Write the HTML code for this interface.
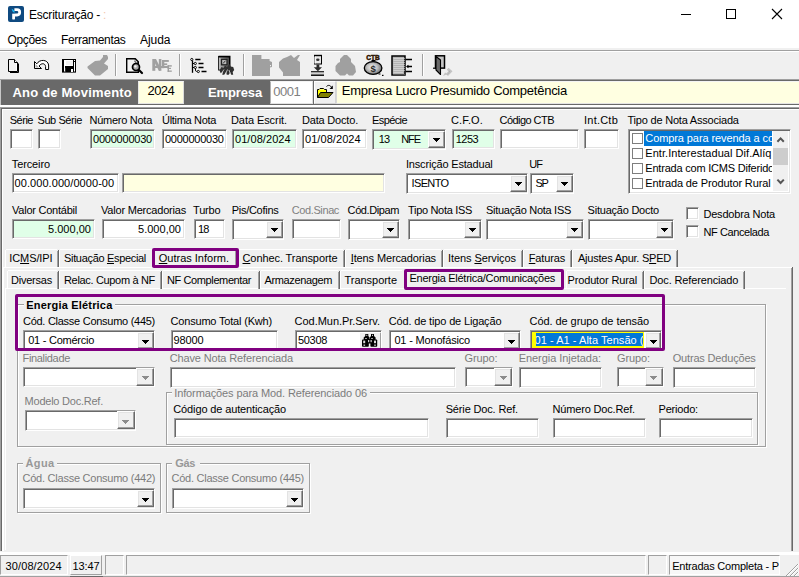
<!DOCTYPE html>
<html><head><meta charset="utf-8"><title>Escrituração</title>
<style>
html,body{margin:0;padding:0}
body{width:799px;height:577px;overflow:hidden;position:relative;background:#f0f0f0;font-family:"Liberation Sans",sans-serif;font-size:11px;color:#000}
body>div,body>svg,body>span{position:absolute;box-sizing:border-box}
.t{white-space:nowrap}
.t u{text-decoration:underline}
.f{border:1px solid;border-color:#a0a0a0 #fff #fff #a0a0a0;box-shadow:inset 1px 1px 0 #696969,inset -1px -1px 0 #e3e3e3}
.btn{background:#f0f0f0;border:1px solid;border-color:#fff #696969 #696969 #fff;box-shadow:inset -1px -1px 0 #a0a0a0,inset 1px 1px 0 #e3e3e3}
.g{border:1px solid #a0a0a0;box-shadow:1px 1px 0 #fff,inset 1px 1px 0 #fff}

</style></head>
<body>
<div style="left:0px;top:0px;width:799px;height:48px;background:#fff"></div>
<svg style="left:8px;top:6px" width="16" height="16" viewBox="0 0 16 16"><rect x="0" y="0" width="16" height="16" rx="2" fill="#0f4a80"/><rect x="4.200" y="7.400" width="2.800" height="6" rx="0.600" fill="#fff"/><path d="M6.400 3.700H9.050A2.650 2.650 0 0 1 9.050 9H5.600" fill="none" stroke="#fff" stroke-width="2.800"/><path d="M3.700 2.700C5.600 3.400 7 5 6.800 7C5 6.400 3.800 4.600 3.700 2.700Z" fill="#19b5f1"/><path d="M4.200 6.500C5 7.200 6.400 7.300 7.400 6.800" fill="none" stroke="#0f4a80" stroke-width="0.900"/></svg>
<svg style="left:680px;top:8px" width="110" height="14" viewBox="0 0 110 14"><path d="M1 6.5h10" stroke="#000" stroke-width="1"/><rect x="46.5" y="1.5" width="9" height="9" fill="none" stroke="#000" stroke-width="1"/><path d="M92 1l10 10M102 1l-10 10" stroke="#000" stroke-width="1.1"/></svg>
<div style="left:0px;top:50px;width:799px;height:1px;background:#a0a0a0"></div>
<div style="left:0px;top:51px;width:799px;height:1px;background:#fff"></div>
<div style="left:115px;top:54px;width:1px;height:22px;background:#a0a0a0"></div>
<div style="left:116px;top:54px;width:1px;height:22px;background:#fff"></div>
<div style="left:179px;top:54px;width:1px;height:22px;background:#a0a0a0"></div>
<div style="left:180px;top:54px;width:1px;height:22px;background:#fff"></div>
<div style="left:243px;top:54px;width:1px;height:22px;background:#a0a0a0"></div>
<div style="left:244px;top:54px;width:1px;height:22px;background:#fff"></div>
<div style="left:422px;top:54px;width:1px;height:22px;background:#a0a0a0"></div>
<div style="left:423px;top:54px;width:1px;height:22px;background:#fff"></div>
<svg style="left:0;top:50px" width="799" height="30" viewBox="0 50 799 30"><defs><linearGradient id="g8" x1="0" x2="1" y1="0" y2="0"><stop offset="0" stop-color="#c4c4c4"/><stop offset="1" stop-color="#4a4a4a"/></linearGradient><radialGradient id="bag" cx="0.45" cy="0.45" r="0.6"><stop offset="0" stop-color="#f4f4f4"/><stop offset="0.5" stop-color="#c0c0c0"/><stop offset="1" stop-color="#606060"/></radialGradient></defs><path d="M8.5 59.5H14.5L17.5 62.5V71.5H8.5Z" fill="#f2f2f2" stroke="#000"/><path d="M14.5 59.5V62.5H17.5" fill="#fff" stroke="#000"/><path d="M16.500 63.500V70.500" stroke="#fff"/><path d="M10 72.5H18.5V63.500" fill="none" stroke="#000"/><path d="M34.5 61.5V68.5H41.5L39 66C41 63.2 45 62.6 45.6 66.5V69.5H48.6V65C47.8 59.2 39.5 59 36.8 63.8Z" fill="#fff" stroke="#000" stroke-linejoin="round"/><path d="M35.5 64v3.5h3.5z" fill="#b0b0b0"/><rect x="62" y="59" width="14" height="13.6" fill="#000"/><rect x="65" y="60" width="8" height="6" fill="#f0f0f0"/><path d="M65.500 65.500V60.500H72.500" fill="none" stroke="#fff"/><rect x="65" y="65" width="8" height="1" fill="#fff"/><rect x="64" y="60" width="1" height="11.500" fill="#fff"/><rect x="74" y="62" width="1" height="9.500" fill="#fff"/><rect x="74" y="60" width="1" height="1" fill="#fff"/><rect x="71" y="69" width="2" height="3" fill="#fff"/><rect x="65" y="68" width="0.500" height="4" fill="#555"/><path d="M103 55H107L108 57V59L104 63.5L108 66V69L100 75.5H95L87.5 68V66.5L95 61L100 60.5L103 57Z" fill="#a0a0a0"/><path d="M126.700 58.700H135.300L138.300 61.700V72.300H126.700Z" fill="#f2f2f2" stroke="#000" stroke-width="1.400"/><path d="M135 59.500v2.800h2.800" fill="none" stroke="#000" stroke-width="0.900" stroke-dasharray="1 0.600"/><circle cx="136" cy="67" r="3.500" fill="#a8a8a8" stroke="#000" stroke-width="1.700"/><circle cx="135.400" cy="66.400" r="1.200" fill="#f4f4f4"/><path d="M139 70L142 73" stroke="#000" stroke-width="2.200" stroke-linecap="round"/><g fill="#a0a0a0"><rect x="152.3" y="59" width="3" height="11.8"/><rect x="158.8" y="59" width="2.6" height="11.8"/><path d="M154.5 59h1.5l4 8v3.8h-1.2l-4.3-8.5z"/><rect x="162" y="60" width="2.3" height="8.2"/><rect x="162" y="60" width="6.8" height="1.9"/><rect x="162" y="63.4" width="5.2" height="1.7"/><rect x="167.6" y="65.2" width="1.4" height="6.6"/><rect x="167.6" y="65.2" width="4.2" height="1.4"/><rect x="167.6" y="67.8" width="3.4" height="1.2"/><rect x="167.6" y="70.5" width="4.2" height="1.3"/><rect x="155" y="66" width="13.500" height="2"/></g><g stroke="#000" fill="none"><path d="M192.5 60.5V72.8" stroke-width="1.3"/><path d="M195.300 59.5H200.5M198.5 63.5H203.5M198.5 67.5H203.5M201.5 71.5H206.5" stroke-width="1.3"/><path d="M192.5 63.5H194M192.5 67.5H194M195.5 68.5V70.8L196.8 71.5" stroke-width="1"/><circle cx="191.8" cy="59.5" r="1.1" fill="#fff"/><circle cx="195.3" cy="63.5" r="1.1" fill="#fff"/><circle cx="195.3" cy="67.5" r="1.1" fill="#fff"/><circle cx="198.3" cy="71.5" r="1.1" fill="#fff"/></g><rect x="218.500" y="56.500" width="11" height="13.500" fill="url(#g8)" stroke="#2a2a2a"/><path d="M218.500 56.600h11.200v13" fill="none" stroke="#000" stroke-width="1.600"/><rect x="221.500" y="59.300" width="5.500" height="5.500" fill="#b8b8b8" stroke="#222" stroke-width="1.300"/><path d="M223 63.500l2.500-2.800" stroke="#333"/><path d="M219.500 70.500l2-3.500 2 1 1.500-2.500 2 1.500 2.500-3 1.200 2.500 2.500 0.500 1 3-1.500 2 0.500 2.700h-2l-1-2.500-1.500 2.500h-2l-0.500-3-2 3h-2l1-3.500-2.500 2z" fill="#303030"/><path d="M222 72.500l2-3M226 73l1.500-3.500M230 73l-1-3" stroke="#c8c8c8" stroke-width="0.900"/><path d="M252 55H261.4V59H269.6V61L272 62V67L270 67.500V76H252Z" fill="#a0a0a0"/><rect x="270" y="65" width="1" height="1.200" fill="#f0f0f0"/><path d="M283 58.500L287 57L291 55L294 58L298 55H300L297 60L300 62V76H283V72.500L279 67.500V62Z" fill="#a0a0a0"/><rect x="314.500" y="55.500" width="7" height="8.500" fill="#e8e8e8" stroke="#000"/><path d="M314 55.500H322" stroke="#000" stroke-width="1.400"/><path d="M315 56.500v7" stroke="#fff" stroke-width="1.200"/><ellipse cx="317.800" cy="59.800" rx="1.700" ry="1.300" fill="#333"/><path d="M316.500 64.500h2.800v2.800h2.700l-4.100 4-4.100-4h2.700z" fill="#2a2a2a"/><rect x="311" y="71.200" width="13" height="1.300" fill="#000"/><rect x="311" y="72.500" width="13" height="2" fill="#d0d0d0"/><rect x="311" y="74.500" width="13" height="1.400" fill="#000"/><path d="M344 55H347L351 59V62L355 66L356 72L353 75.500H349L347 73.500L345 75.500H340L335.500 71V66L338 63L340 62V59Z" fill="#a0a0a0"/><text x="366.200" y="60.300" font-family="Liberation Sans" font-weight="bold" font-size="7.200" fill="#4a2400" stroke="#1e0e00" stroke-width="0.500" textLength="13.500" lengthAdjust="spacingAndGlyphs">CTB</text><rect x="371.500" y="60" width="4" height="1.500" fill="#000"/><ellipse cx="373.100" cy="68" rx="8.800" ry="6.400" fill="url(#bag)" stroke="#000" stroke-width="1.300"/><text x="370.600" y="71.600" font-family="Liberation Sans" font-weight="bold" font-size="9.500" fill="#2a2a2a">$</text><rect x="378.500" y="73.500" width="2" height="1" fill="#000"/><rect x="382" y="74.800" width="1.500" height="1.200" fill="#000"/><rect x="392" y="56" width="13" height="19" fill="#b4b4b4" stroke="#000" stroke-width="1.500"/><path d="M393.500 58.500h9.500M393.500 60.500h9.500M393.500 62.500h9.500M393.500 64.500h9.500M393.500 66.500h9.500M393.500 68.500h9.500M393.500 70.500h9.500M393.500 72.500h9.500" stroke="#d4d4d4" stroke-width="0.900"/><path d="M404 58v14" stroke="#e8e8e8" stroke-width="1" stroke-dasharray="1 1"/><path d="M393 74.500h12" stroke="#555" stroke-width="1"/><path d="M405.500 59.500H412M407 66.500H412M405.500 71.500H412" stroke="#000" stroke-width="1.300"/><path d="M408.500 64.800L406 66.500l2.500 1.700z" fill="#000"/><rect x="435.500" y="55.800" width="9" height="12.300" fill="#c4c4c4" stroke="#000" stroke-width="1.500"/><path d="M436 56.500L440.500 60V74.500L436 70Z" fill="#6a6a6a" stroke="#000" stroke-width="1.100" stroke-linejoin="round"/><path d="M433 68.200H436" stroke="#000" stroke-width="1.200"/><path d="M448.500 67.800L452.500 71.300L448 76L446.500 74.500L443 76L445 72.500L446.500 73.200L448.800 70.800L447 69.500Z" fill="#c4c4c4"/><path d="M447.500 70l2.500 1.600-3 3" fill="none" stroke="#a4a4a4" stroke-width="0.900" stroke-dasharray="1.2 0.8"/></svg>
<div style="left:0px;top:79px;width:799px;height:1px;background:#a0a0a0"></div>
<div style="left:0px;top:80px;width:799px;height:25px;background:#696969"></div>
<div style="left:0px;top:80px;width:1px;height:25px;background:#c8c8c8"></div>
<div style="left:0px;top:105px;width:799px;height:2px;background:#fff"></div>
<div style="left:138px;top:81px;width:46px;height:23px;background:#ffffe1;border-style:solid;border-width:1px;border-color:#f4f4f4 #dcdcdc #e4e4e4 #e8e8e8"></div>
<div style="left:270px;top:81px;width:43px;height:23px;background:#fff;border-style:solid;border-width:1px;border-color:#f4f4f4 #dcdcdc #e4e4e4 #b0b0b0"></div>
<div style="left:314px;top:81px;width:22px;height:23px;background:#f0f0f0;border:1px solid;border-color:#fff #d4d4d4 #d4d4d4 #fff"></div>
<svg style="left:316px;top:83px" width="18" height="16" viewBox="316 83 18 16"><path d="M317.500 97.500V89.500H319L320 88.500H323.500L324.500 89.500H326.500V92" fill="#ffff66" stroke="#000"/><path d="M318 90h8v2h-6l-2 4z" fill="#ffff00"/><path d="M320.500 92.500H333L328.500 97.500H317.500Z" fill="#808000" stroke="#000" stroke-linejoin="round"/><path d="M326.500 86.500C328 84.800 330.500 85 331.500 87.500" fill="none" stroke="#000"/><path d="M332.800 85.500V89H329.500Z" fill="#000"/></svg>
<div style="left:336px;top:81px;width:469px;height:23px;background:#ffffe1;border-style:solid;border-width:1px;border-color:#f4f4f4 #dcdcdc #e4e4e4 #d8d8d8"></div>
<div style="left:0px;top:107px;width:799px;height:1px;background:#a0a0a0"></div>
<div style="left:1px;top:108px;width:798px;height:1px;background:#696969"></div>
<div style="left:2px;top:109px;width:797px;height:1px;background:#fff"></div>
<div style="left:0px;top:107px;width:1px;height:444px;background:#a0a0a0"></div>
<div style="left:1px;top:108px;width:1px;height:443px;background:#696969"></div>
<div style="left:2px;top:109px;width:1px;height:442px;background:#fff"></div>
<div style="left:0px;top:552px;width:799px;height:3px;background:#fff"></div>
<div style="left:0px;top:576px;width:799px;height:1px;background:#a0a0a0"></div>
<div style="left:70px;top:576px;width:33px;height:1px;background:#696969"></div>
<div class="f" style="left:10px;top:129px;width:23px;height:20px;background:#fff"></div>
<div class="f" style="left:38px;top:129px;width:23px;height:20px;background:#fff"></div>
<div class="f" style="left:90px;top:129px;width:65px;height:20px;background:#e0ffe8"></div>
<div class="f" style="left:162px;top:129px;width:65px;height:20px;background:#fff"></div>
<div class="f" style="left:232px;top:129px;width:65px;height:20px;background:#e0ffe8"></div>
<div class="f" style="left:302px;top:129px;width:65px;height:20px;background:#fff"></div>
<div class="f" style="left:372px;top:129px;width:74px;height:21px;background:#e0ffe8"></div>
<div class="btn" style="left:428px;top:131px;width:17px;height:17px"></div>
<svg style="left:433px;top:138px" width="7" height="4" viewBox="0 0 7 4" shape-rendering="crispEdges"><path d="M0 0h7v1h-7zM1 1h5v1h-5zM2 2h3v1h-3zM3 3h1v1h-1z" fill="#000"/></svg>
<div class="f" style="left:452px;top:129px;width:43px;height:20px;background:#e0ffe8"></div>
<div class="f" style="left:500px;top:129px;width:79px;height:20px;background:#fff"></div>
<div class="f" style="left:584px;top:129px;width:35px;height:20px;background:#fff"></div>
<div class="f" style="left:628px;top:129px;width:163px;height:65px;background:#fff"></div>
<div style="left:644px;top:131px;width:128px;height:15px;background:#0078d7"></div>
<div style="left:632px;top:133px;width:11px;height:11px;background:#fff;border:1px solid #7e7e7e"></div>
<div style="left:632px;top:148px;width:11px;height:11px;background:#fff;border:1px solid #7e7e7e"></div>
<div style="left:632px;top:163px;width:11px;height:11px;background:#fff;border:1px solid #7e7e7e"></div>
<div style="left:632px;top:178px;width:11px;height:11px;background:#fff;border:1px solid #7e7e7e"></div>
<div style="left:773px;top:131px;width:15px;height:60px;background:#f0f0f0"></div>
<div style="left:773px;top:148px;width:15px;height:17px;background:#cdcdcd"></div>
<svg style="left:775px;top:135px" width="12" height="9" viewBox="775 135 12 9"><path d="M777.400 141.800L780.600 138.400L783.800 141.800" fill="none" stroke="#555" stroke-width="2"/></svg>
<svg style="left:775px;top:177px" width="12" height="9" viewBox="775 177 12 9"><path d="M777.400 179.600L780.600 183L783.800 179.600" fill="none" stroke="#555" stroke-width="2"/></svg>
<div class="f" style="left:12px;top:173px;width:107px;height:20px;background:#fff"></div>
<div class="f" style="left:122px;top:173px;width:263px;height:20px;background:#ffffe1"></div>
<div class="f" style="left:406px;top:173px;width:122px;height:21px;background:#fff"></div>
<div class="btn" style="left:510px;top:175px;width:17px;height:17px"></div>
<svg style="left:515px;top:182px" width="7" height="4" viewBox="0 0 7 4" shape-rendering="crispEdges"><path d="M0 0h7v1h-7zM1 1h5v1h-5zM2 2h3v1h-3zM3 3h1v1h-1z" fill="#000"/></svg>
<div class="f" style="left:530px;top:173px;width:44px;height:21px;background:#fff"></div>
<div class="btn" style="left:556px;top:175px;width:17px;height:17px"></div>
<svg style="left:561px;top:182px" width="7" height="4" viewBox="0 0 7 4" shape-rendering="crispEdges"><path d="M0 0h7v1h-7zM1 1h5v1h-5zM2 2h3v1h-3zM3 3h1v1h-1z" fill="#000"/></svg>
<div class="f" style="left:12px;top:219px;width:83px;height:20px;background:#e0ffe8"></div>
<div class="f" style="left:102px;top:219px;width:83px;height:20px;background:#fff"></div>
<div class="f" style="left:194px;top:219px;width:31px;height:20px;background:#fff"></div>
<div class="f" style="left:232px;top:219px;width:52px;height:21px;background:#fff"></div>
<div class="btn" style="left:266px;top:221px;width:17px;height:17px"></div>
<svg style="left:271px;top:228px" width="7" height="4" viewBox="0 0 7 4" shape-rendering="crispEdges"><path d="M0 0h7v1h-7zM1 1h5v1h-5zM2 2h3v1h-3zM3 3h1v1h-1z" fill="#000"/></svg>
<div class="f" style="left:292px;top:219px;width:49px;height:20px;background:#fff"></div>
<div class="f" style="left:348px;top:219px;width:52px;height:21px;background:#fff"></div>
<div class="btn" style="left:382px;top:221px;width:17px;height:17px"></div>
<svg style="left:387px;top:228px" width="7" height="4" viewBox="0 0 7 4" shape-rendering="crispEdges"><path d="M0 0h7v1h-7zM1 1h5v1h-5zM2 2h3v1h-3zM3 3h1v1h-1z" fill="#000"/></svg>
<div class="f" style="left:408px;top:219px;width:74px;height:21px;background:#fff"></div>
<div class="btn" style="left:464px;top:221px;width:17px;height:17px"></div>
<svg style="left:469px;top:228px" width="7" height="4" viewBox="0 0 7 4" shape-rendering="crispEdges"><path d="M0 0h7v1h-7zM1 1h5v1h-5zM2 2h3v1h-3zM3 3h1v1h-1z" fill="#000"/></svg>
<div class="f" style="left:486px;top:219px;width:98px;height:21px;background:#fff"></div>
<div class="btn" style="left:566px;top:221px;width:17px;height:17px"></div>
<svg style="left:571px;top:228px" width="7" height="4" viewBox="0 0 7 4" shape-rendering="crispEdges"><path d="M0 0h7v1h-7zM1 1h5v1h-5zM2 2h3v1h-3zM3 3h1v1h-1z" fill="#000"/></svg>
<div class="f" style="left:588px;top:219px;width:86px;height:21px;background:#fff"></div>
<div class="btn" style="left:656px;top:221px;width:17px;height:17px"></div>
<svg style="left:661px;top:228px" width="7" height="4" viewBox="0 0 7 4" shape-rendering="crispEdges"><path d="M0 0h7v1h-7zM1 1h5v1h-5zM2 2h3v1h-3zM3 3h1v1h-1z" fill="#000"/></svg>
<div class="f" style="left:686px;top:207px;width:13px;height:13px;background:#fff"></div>
<div class="f" style="left:686px;top:225px;width:13px;height:13px;background:#fff"></div>
<div style="left:3px;top:267px;width:789px;height:1px;background:#fff"></div>
<div style="left:3px;top:267px;width:1px;height:284px;background:#fff"></div>
<div style="left:792px;top:267px;width:1px;height:284px;background:#696969"></div>
<div style="left:791px;top:268px;width:1px;height:283px;background:#a0a0a0"></div>
<div style="left:6px;top:249px;width:51px;height:1px;background:#fff"></div>
<div style="left:5px;top:250px;width:1px;height:17px;background:#fff"></div>
<div style="left:57px;top:251px;width:1px;height:16px;background:#a0a0a0"></div>
<div style="left:58px;top:250px;width:1px;height:17px;background:#696969"></div>
<div style="left:60px;top:249px;width:92px;height:1px;background:#fff"></div>
<div style="left:59px;top:250px;width:1px;height:17px;background:#fff"></div>
<div style="left:152px;top:251px;width:1px;height:16px;background:#a0a0a0"></div>
<div style="left:153px;top:250px;width:1px;height:17px;background:#696969"></div>
<div style="left:155px;top:249px;width:80px;height:1px;background:#fff"></div>
<div style="left:154px;top:250px;width:1px;height:17px;background:#fff"></div>
<div style="left:235px;top:251px;width:1px;height:16px;background:#a0a0a0"></div>
<div style="left:236px;top:250px;width:1px;height:17px;background:#696969"></div>
<div style="left:238px;top:249px;width:105px;height:1px;background:#fff"></div>
<div style="left:237px;top:250px;width:1px;height:17px;background:#fff"></div>
<div style="left:343px;top:251px;width:1px;height:16px;background:#a0a0a0"></div>
<div style="left:344px;top:250px;width:1px;height:17px;background:#696969"></div>
<div style="left:346px;top:249px;width:95px;height:1px;background:#fff"></div>
<div style="left:345px;top:250px;width:1px;height:17px;background:#fff"></div>
<div style="left:441px;top:251px;width:1px;height:16px;background:#a0a0a0"></div>
<div style="left:442px;top:250px;width:1px;height:17px;background:#696969"></div>
<div style="left:444px;top:249px;width:77px;height:1px;background:#fff"></div>
<div style="left:443px;top:250px;width:1px;height:17px;background:#fff"></div>
<div style="left:521px;top:251px;width:1px;height:16px;background:#a0a0a0"></div>
<div style="left:522px;top:250px;width:1px;height:17px;background:#696969"></div>
<div style="left:524px;top:249px;width:46px;height:1px;background:#fff"></div>
<div style="left:523px;top:250px;width:1px;height:17px;background:#fff"></div>
<div style="left:570px;top:251px;width:1px;height:16px;background:#a0a0a0"></div>
<div style="left:571px;top:250px;width:1px;height:17px;background:#696969"></div>
<div style="left:573px;top:249px;width:103px;height:1px;background:#fff"></div>
<div style="left:572px;top:250px;width:1px;height:17px;background:#fff"></div>
<div style="left:676px;top:251px;width:1px;height:16px;background:#a0a0a0"></div>
<div style="left:677px;top:250px;width:1px;height:17px;background:#696969"></div>
<div style="left:5px;top:288px;width:781px;height:1px;background:#fff"></div>
<div style="left:5px;top:288px;width:1px;height:262px;background:#fff"></div>
<div style="left:8px;top:270px;width:49px;height:1px;background:#fff"></div>
<div style="left:7px;top:271px;width:1px;height:18px;background:#fff"></div>
<div style="left:57px;top:272px;width:1px;height:17px;background:#a0a0a0"></div>
<div style="left:58px;top:271px;width:1px;height:18px;background:#696969"></div>
<div style="left:60px;top:270px;width:100px;height:1px;background:#fff"></div>
<div style="left:59px;top:271px;width:1px;height:18px;background:#fff"></div>
<div style="left:160px;top:272px;width:1px;height:17px;background:#a0a0a0"></div>
<div style="left:161px;top:271px;width:1px;height:18px;background:#696969"></div>
<div style="left:163px;top:270px;width:95px;height:1px;background:#fff"></div>
<div style="left:162px;top:271px;width:1px;height:18px;background:#fff"></div>
<div style="left:258px;top:272px;width:1px;height:17px;background:#a0a0a0"></div>
<div style="left:259px;top:271px;width:1px;height:18px;background:#696969"></div>
<div style="left:261px;top:270px;width:77px;height:1px;background:#fff"></div>
<div style="left:260px;top:271px;width:1px;height:18px;background:#fff"></div>
<div style="left:338px;top:272px;width:1px;height:17px;background:#a0a0a0"></div>
<div style="left:339px;top:271px;width:1px;height:18px;background:#696969"></div>
<div style="left:341px;top:270px;width:61px;height:1px;background:#fff"></div>
<div style="left:340px;top:271px;width:1px;height:18px;background:#fff"></div>
<div style="left:405px;top:270px;width:159px;height:1px;background:#fff"></div>
<div style="left:404px;top:271px;width:1px;height:18px;background:#fff"></div>
<div style="left:567px;top:270px;width:75px;height:1px;background:#fff"></div>
<div style="left:566px;top:271px;width:1px;height:18px;background:#fff"></div>
<div style="left:642px;top:272px;width:1px;height:17px;background:#a0a0a0"></div>
<div style="left:643px;top:271px;width:1px;height:18px;background:#696969"></div>
<div style="left:645px;top:270px;width:98px;height:1px;background:#fff"></div>
<div style="left:644px;top:271px;width:1px;height:18px;background:#fff"></div>
<div style="left:743px;top:272px;width:1px;height:17px;background:#a0a0a0"></div>
<div style="left:744px;top:271px;width:1px;height:18px;background:#696969"></div>
<div class="g" style="left:17px;top:304px;width:749px;height:143px"></div>
<div style="left:24px;top:300px;width:91px;height:10px;background:#f0f0f0"></div>
<div class="f" style="left:23px;top:330px;width:132px;height:21px;background:#fff"></div>
<div class="btn" style="left:137px;top:332px;width:17px;height:17px"></div>
<svg style="left:142px;top:340px" width="7" height="4" viewBox="0 0 7 4" shape-rendering="crispEdges"><path d="M0 0h7v1h-7zM1 1h5v1h-5zM2 2h3v1h-3zM3 3h1v1h-1z" fill="#000"/></svg>
<div class="f" style="left:171px;top:330px;width:107px;height:20px;background:#fff"></div>
<div class="f" style="left:295px;top:330px;width:87px;height:20px;background:#fff"></div>
<div style="left:360px;top:333px;width:21px;height:15px;background:#f0f0f0;border-right:1px solid #a0a0a0"></div>
<svg style="left:361px;top:333px" width="18" height="15" viewBox="361 333 18 15"><g fill="#000"><path d="M365.300 334h3v2l1.200 1.500v2.500h-5.800v-2.500l1.600-1.500z"/><path d="M371 334h3v2l1.600 1.500v2.500h-5.800v-2.500l1.200-1.500z"/><rect x="362" y="339.500" width="6.800" height="7.300" rx="0.800"/><rect x="370.400" y="339.500" width="6.800" height="7.300" rx="0.800"/><rect x="368" y="339" width="3.200" height="4.500"/></g><g fill="#fff"><rect x="366.300" y="334.800" width="1" height="1"/><rect x="372" y="334.800" width="1" height="1"/><rect x="365.400" y="338" width="1.200" height="1"/><rect x="371.400" y="338" width="1.200" height="1"/><rect x="363.200" y="340.600" width="2" height="2.600" fill="#d8d8d8"/><rect x="374" y="340.600" width="2" height="2.600" fill="#d8d8d8"/><rect x="363.500" y="344.500" width="1.600" height="1.400" fill="#c0c0c0"/><rect x="374.200" y="344.500" width="1.600" height="1.400" fill="#c0c0c0"/><rect x="368.200" y="340" width="1" height="2.200"/><rect x="370.600" y="340" width="1" height="2.200"/></g></svg>
<div class="f" style="left:389px;top:330px;width:132px;height:21px;background:#fff"></div>
<div class="btn" style="left:503px;top:332px;width:17px;height:17px"></div>
<svg style="left:508px;top:340px" width="7" height="4" viewBox="0 0 7 4" shape-rendering="crispEdges"><path d="M0 0h7v1h-7zM1 1h5v1h-5zM2 2h3v1h-3zM3 3h1v1h-1z" fill="#000"/></svg>
<div class="f" style="left:530px;top:330px;width:132px;height:21px;background:#fff"></div>
<div class="btn" style="left:645px;top:332px;width:16px;height:17px"></div>
<svg style="left:650px;top:340px" width="7" height="4" viewBox="0 0 7 4" shape-rendering="crispEdges"><path d="M0 0h7v1h-7zM1 1h5v1h-5zM2 2h3v1h-3zM3 3h1v1h-1z" fill="#000"/></svg>
<div style="left:532px;top:332px;width:112px;height:16px;background:#ffff00"></div>
<div style="left:536px;top:333px;width:107px;height:13px;background:#0078d7"></div>
<div style="left:532px;top:332px;width:4px;height:16px;background:#ffff00;z-index:3"></div>
<div class="f" style="left:23px;top:367px;width:132px;height:20px;background:#fff"></div>
<div class="btn" style="left:136px;top:368px;width:18px;height:18px"></div>
<svg style="left:142px;top:376px" width="7" height="4" viewBox="0 0 7 4" shape-rendering="crispEdges"><path d="M0 0h7v1h-7zM1 1h5v1h-5zM2 2h3v1h-3zM3 3h1v1h-1z" fill="#8c8c8c"/></svg>
<div class="f" style="left:170px;top:367px;width:286px;height:21px;background:#fff"></div>
<div class="f" style="left:465px;top:367px;width:48px;height:20px;background:#fff"></div>
<div class="btn" style="left:494px;top:368px;width:18px;height:18px"></div>
<svg style="left:500px;top:376px" width="7" height="4" viewBox="0 0 7 4" shape-rendering="crispEdges"><path d="M0 0h7v1h-7zM1 1h5v1h-5zM2 2h3v1h-3zM3 3h1v1h-1z" fill="#8c8c8c"/></svg>
<div class="f" style="left:519px;top:367px;width:83px;height:21px;background:#fff"></div>
<div class="f" style="left:617px;top:367px;width:47px;height:20px;background:#fff"></div>
<div class="btn" style="left:645px;top:368px;width:18px;height:18px"></div>
<svg style="left:650px;top:376px" width="7" height="4" viewBox="0 0 7 4" shape-rendering="crispEdges"><path d="M0 0h7v1h-7zM1 1h5v1h-5zM2 2h3v1h-3zM3 3h1v1h-1z" fill="#8c8c8c"/></svg>
<div class="f" style="left:673px;top:367px;width:83px;height:21px;background:#fff"></div>
<div class="f" style="left:25px;top:410px;width:111px;height:21px;background:#fff"></div>
<div class="btn" style="left:117px;top:411px;width:18px;height:18px"></div>
<svg style="left:122px;top:420px" width="7" height="4" viewBox="0 0 7 4" shape-rendering="crispEdges"><path d="M0 0h7v1h-7zM1 1h5v1h-5zM2 2h3v1h-3zM3 3h1v1h-1z" fill="#8c8c8c"/></svg>
<div class="g" style="left:166px;top:392px;width:592px;height:53px"></div>
<div style="left:172px;top:388px;width:198px;height:10px;background:#f0f0f0"></div>
<div class="f" style="left:174px;top:418px;width:255px;height:20px;background:#fff"></div>
<div class="f" style="left:446px;top:418px;width:93px;height:20px;background:#fff"></div>
<div class="f" style="left:553px;top:418px;width:93px;height:20px;background:#fff"></div>
<div class="f" style="left:659px;top:418px;width:94px;height:20px;background:#fff"></div>
<div style="left:152px;top:248px;width:87px;height:20px;border:3px solid #800080;border-radius:2px"></div>
<div style="left:404px;top:269px;width:160px;height:21px;border:3px solid #800080;border-radius:2px"></div>
<div style="left:15px;top:294px;width:650px;height:57px;border:3px solid #800080;border-radius:2px"></div>
<div class="g" style="left:17px;top:463px;width:144px;height:50px"></div>
<div style="left:23px;top:458px;width:34px;height:10px;background:#f0f0f0"></div>
<div class="f" style="left:23px;top:488px;width:132px;height:21px;background:#fff"></div>
<div class="btn" style="left:137px;top:490px;width:17px;height:17px"></div>
<svg style="left:142px;top:498px" width="7" height="4" viewBox="0 0 7 4" shape-rendering="crispEdges"><path d="M0 0h7v1h-7zM1 1h5v1h-5zM2 2h3v1h-3zM3 3h1v1h-1z" fill="#000"/></svg>
<div class="g" style="left:166px;top:463px;width:144px;height:50px"></div>
<div style="left:172px;top:458px;width:28px;height:10px;background:#f0f0f0"></div>
<div class="f" style="left:172px;top:488px;width:132px;height:21px;background:#fff"></div>
<div class="btn" style="left:286px;top:490px;width:17px;height:17px"></div>
<svg style="left:291px;top:498px" width="7" height="4" viewBox="0 0 7 4" shape-rendering="crispEdges"><path d="M0 0h7v1h-7zM1 1h5v1h-5zM2 2h3v1h-3zM3 3h1v1h-1z" fill="#000"/></svg>
<div style="left:0px;top:555px;width:68px;height:20px;background:#f0f0f0;border:1px solid;border-color:#a0a0a0 #fff #fff #a0a0a0"></div>
<div style="left:70px;top:555px;width:32px;height:20px;background:#f0f0f0;border:1px solid;border-color:#fff #a0a0a0 #a0a0a0 #fff"></div>
<div style="left:105px;top:555px;width:19px;height:20px;background:#f0f0f0;border:1px solid;border-color:#a0a0a0 #fff #fff #a0a0a0"></div>
<div style="left:126px;top:555px;width:520px;height:20px;background:#f0f0f0;border:1px solid;border-color:#a0a0a0 #fff #fff #a0a0a0"></div>
<div style="left:648px;top:555px;width:19px;height:20px;background:#f0f0f0;border:1px solid;border-color:#a0a0a0 #fff #fff #a0a0a0"></div>
<div style="left:669px;top:555px;width:111px;height:20px;background:#f7f7f7;border:1px solid;border-color:#a0a0a0 #fff #fff #a0a0a0"></div>
<svg style="left:785px;top:563px" width="14" height="14" viewBox="0 0 14 14"><path d="M13 1L1 13M13 5L5 13M13 9L9 13" stroke="#a0a0a0" stroke-width="1"/><path d="M14 1L2 13M14 5L6 13M14 9L10 13" stroke="#fff" stroke-width="1"/></svg>
<span class="t" style="left:29px;top:7px;line-height:16px;font-size:12px;color:#000;letter-spacing:-0.217px;">Escrituração -</span>
<span class="t" style="left:103px;top:7px;line-height:16px;font-size:12px;color:#f4c9b0;letter-spacing:-0.180px;">:</span>
<span class="t" style="left:7.5px;top:32px;line-height:16px;font-size:12px;color:#000;letter-spacing:-0.352px;">Opções</span>
<span class="t" style="left:61px;top:32px;line-height:16px;font-size:12px;color:#000;letter-spacing:-0.321px;">Ferramentas</span>
<span class="t" style="left:140px;top:32px;line-height:16px;font-size:12px;color:#000;letter-spacing:-0.041px;">Ajuda</span>
<span class="t" style="left:12.5px;top:84px;line-height:17px;font-size:13px;color:#fff;font-weight:bold;letter-spacing:0.201px;">Ano de Movimento</span>
<span class="t" style="left:147.5px;top:82px;line-height:17px;font-size:13px;color:#000;letter-spacing:-0.543px;">2024</span>
<span class="t" style="left:208px;top:84px;line-height:17px;font-size:13px;color:#fff;font-weight:bold;letter-spacing:-0.132px;">Empresa</span>
<span class="t" style="left:273.3px;top:83px;line-height:17px;font-size:13px;color:#808080;letter-spacing:-0.480px;">0001</span>
<span class="t" style="left:341.8px;top:82px;line-height:17px;font-size:13px;color:#000;letter-spacing:-0.255px;">Empresa Lucro Presumido Competência</span>
<span class="t" style="left:9.75px;top:113px;line-height:15px;font-size:11px;color:#000;letter-spacing:-0.487px;">Série</span>
<span class="t" style="left:37.5px;top:113px;line-height:15px;font-size:11px;color:#000;letter-spacing:-0.424px;">Sub Série</span>
<span class="t" style="left:89.5px;top:113px;line-height:15px;font-size:11px;color:#000;letter-spacing:-0.266px;">Número Nota</span>
<span class="t" style="left:162px;top:113px;line-height:15px;font-size:11px;color:#000;letter-spacing:-0.315px;">Última Nota</span>
<span class="t" style="left:231px;top:113px;line-height:15px;font-size:11px;color:#000;letter-spacing:-0.072px;">Data Escrit.</span>
<span class="t" style="left:302px;top:113px;line-height:15px;font-size:11px;color:#000;letter-spacing:-0.190px;">Data Docto.</span>
<span class="t" style="left:372px;top:113px;line-height:15px;font-size:11px;color:#000;letter-spacing:-0.592px;">Espécie</span>
<span class="t" style="left:451px;top:113px;line-height:15px;font-size:11px;color:#000;letter-spacing:0.138px;">C.F.O.</span>
<span class="t" style="left:499.5px;top:113px;line-height:15px;font-size:11px;color:#000;letter-spacing:-0.542px;">Código CTB</span>
<span class="t" style="left:584px;top:113px;line-height:15px;font-size:11px;color:#000;letter-spacing:0.228px;">Int.Ctb</span>
<span class="t" style="left:627.5px;top:113px;line-height:15px;font-size:11px;color:#000;letter-spacing:-0.208px;">Tipo de Nota Associada</span>
<span class="t" style="left:93px;top:132px;line-height:15px;font-size:11px;color:#000;letter-spacing:-0.219px;">0000000030</span>
<span class="t" style="left:165px;top:132px;line-height:15px;font-size:11px;color:#000;letter-spacing:-0.244px;">0000000030</span>
<span class="t" style="left:235px;top:132px;line-height:15px;font-size:11px;color:#000;letter-spacing:0.069px;">01/08/2024</span>
<span class="t" style="left:305px;top:132px;line-height:15px;font-size:11px;color:#000;letter-spacing:0.069px;">01/08/2024</span>
<span class="t" style="left:378.75px;top:132px;line-height:15px;font-size:11px;color:#000;letter-spacing:-0.750px;">13</span>
<span class="t" style="left:401.25px;top:132px;line-height:15px;font-size:11px;color:#000;letter-spacing:-1.083px;">NFE</span>
<span class="t" style="left:455.75px;top:132px;line-height:15px;font-size:11px;color:#000;letter-spacing:-0.496px;">1253</span>
<span class="t" style="left:645.3px;top:131px;line-height:15px;font-size:11px;color:#fff;letter-spacing:-0.090px;width:127px;overflow:hidden;">Compra para revenda a co</span>
<span class="t" style="left:645.3px;top:146px;line-height:15px;font-size:11px;color:#000;letter-spacing:0.054px;width:127px;overflow:hidden;">Entr.Interestadual Dif.Alíq</span>
<span class="t" style="left:645.3px;top:161px;line-height:15px;font-size:11px;color:#000;letter-spacing:-0.208px;width:127px;overflow:hidden;">Entrada com ICMS Diferido</span>
<span class="t" style="left:645.3px;top:176px;line-height:15px;font-size:11px;color:#000;letter-spacing:-0.129px;width:127px;overflow:hidden;">Entrada de Produtor Rural</span>
<span class="t" style="left:11.75px;top:157px;line-height:15px;font-size:11px;color:#000;letter-spacing:-0.109px;">Terceiro</span>
<span class="t" style="left:14.5px;top:176px;line-height:15px;font-size:11px;color:#000;letter-spacing:0.070px;">00.000.000/0000-00</span>
<span class="t" style="left:406px;top:157px;line-height:15px;font-size:11px;color:#000;letter-spacing:-0.183px;">Inscrição Estadual</span>
<span class="t" style="left:411.5px;top:176px;line-height:15px;font-size:11px;color:#000;letter-spacing:-0.628px;">ISENTO</span>
<span class="t" style="left:529.3px;top:157px;line-height:15px;font-size:11px;color:#000;letter-spacing:-0.986px;">UF</span>
<span class="t" style="left:535.6px;top:176px;line-height:15px;font-size:11px;color:#000;letter-spacing:-1.494px;">SP</span>
<span class="t" style="left:12px;top:203px;line-height:15px;font-size:11px;color:#000;letter-spacing:-0.234px;">Valor Contábil</span>
<span class="t" style="left:48px;top:222px;line-height:15px;font-size:11px;color:#000;letter-spacing:0.021px;">5.000,00</span>
<span class="t" style="left:101px;top:203px;line-height:15px;font-size:11px;color:#000;letter-spacing:-0.203px;">Valor Mercadorias</span>
<span class="t" style="left:138px;top:222px;line-height:15px;font-size:11px;color:#000;letter-spacing:0.021px;">5.000,00</span>
<span class="t" style="left:193px;top:203px;line-height:15px;font-size:11px;color:#000;letter-spacing:-0.166px;">Turbo</span>
<span class="t" style="left:198px;top:222px;line-height:15px;font-size:11px;color:#000;letter-spacing:-0.875px;">18</span>
<span class="t" style="left:231.7px;top:203px;line-height:15px;font-size:11px;color:#000;letter-spacing:-0.273px;">Pis/Cofins</span>
<span class="t" style="left:291.7px;top:203px;line-height:15px;font-size:11px;color:#808080;letter-spacing:-0.385px;">Cod.Sinac</span>
<span class="t" style="left:347.6px;top:203px;line-height:15px;font-size:11px;color:#000;letter-spacing:-0.403px;">Cód.Dipam</span>
<span class="t" style="left:408px;top:203px;line-height:15px;font-size:11px;color:#000;letter-spacing:-0.314px;">Tipo Nota ISS</span>
<span class="t" style="left:486px;top:203px;line-height:15px;font-size:11px;color:#000;letter-spacing:-0.288px;">Situação Nota ISS</span>
<span class="t" style="left:587.6px;top:203px;line-height:15px;font-size:11px;color:#000;letter-spacing:-0.229px;">Situação Docto</span>
<span class="t" style="left:703.4px;top:207px;line-height:15px;font-size:11px;color:#000;letter-spacing:-0.185px;">Desdobra Nota</span>
<span class="t" style="left:703.4px;top:225px;line-height:15px;font-size:11px;color:#000;letter-spacing:-0.394px;">NF Cancelada</span>
<span class="t" style="left:9.25px;top:251px;line-height:15px;font-size:11px;color:#000;letter-spacing:-0.096px;">IC<u>M</u>S/IPI</span>
<span class="t" style="left:64px;top:251px;line-height:15px;font-size:11px;color:#000;letter-spacing:-0.322px;">Situação <u>E</u>special</span>
<span class="t" style="left:158.75px;top:251px;line-height:15px;font-size:11px;color:#000;letter-spacing:-0.004px;"><u>O</u>utras Inform.</span>
<span class="t" style="left:242.5px;top:251px;line-height:15px;font-size:11px;color:#000;letter-spacing:-0.090px;"><u>C</u>onhec. Transporte</span>
<span class="t" style="left:350.75px;top:251px;line-height:15px;font-size:11px;color:#000;letter-spacing:-0.129px;"><u>I</u>tens Mercadorias</span>
<span class="t" style="left:448px;top:251px;line-height:15px;font-size:11px;color:#000;letter-spacing:-0.078px;">Itens <u>S</u>erviços</span>
<span class="t" style="left:528.75px;top:251px;line-height:15px;font-size:11px;color:#000;letter-spacing:-0.152px;"><u>F</u>aturas</span>
<span class="t" style="left:578px;top:251px;line-height:15px;font-size:11px;color:#000;letter-spacing:-0.235px;">Ajustes Apur. S<u>P</u>ED</span>
<span class="t" style="left:11px;top:273px;line-height:15px;font-size:11px;color:#000;letter-spacing:-0.225px;">Diversas</span>
<span class="t" style="left:64px;top:273px;line-height:15px;font-size:11px;color:#000;letter-spacing:-0.329px;">Relac. Cupom à NF</span>
<span class="t" style="left:167px;top:273px;line-height:15px;font-size:11px;color:#000;letter-spacing:-0.391px;">NF Complementar</span>
<span class="t" style="left:264.5px;top:273px;line-height:15px;font-size:11px;color:#000;letter-spacing:-0.368px;">Armazenagem</span>
<span class="t" style="left:344.5px;top:273px;line-height:15px;font-size:11px;color:#000;letter-spacing:-0.030px;">Transporte</span>
<span class="t" style="left:567.5px;top:273px;line-height:15px;font-size:11px;color:#000;letter-spacing:-0.146px;">Produtor Rural</span>
<span class="t" style="left:649.5px;top:273px;line-height:15px;font-size:11px;color:#000;letter-spacing:-0.136px;">Doc. Referenciado</span>
<span class="t" style="left:409.5px;top:271px;line-height:15px;font-size:11px;color:#000;letter-spacing:-0.275px;">Energia Elétrica/Comunicações</span>
<span class="t" style="left:26.25px;top:298px;line-height:15px;font-size:11px;color:#000;font-weight:bold;letter-spacing:0.193px;">Energia Elétrica</span>
<span class="t" style="left:23px;top:314px;line-height:15px;font-size:11px;color:#000;letter-spacing:-0.272px;">Cód. Classe Consumo (445)</span>
<span class="t" style="left:28.25px;top:333px;line-height:15px;font-size:11px;color:#000;letter-spacing:-0.256px;">01 - Comércio</span>
<span class="t" style="left:170.5px;top:314px;line-height:15px;font-size:11px;color:#000;letter-spacing:-0.182px;">Consumo Total (Kwh)</span>
<span class="t" style="left:173.5px;top:333px;line-height:15px;font-size:11px;color:#000;letter-spacing:-0.119px;">98000</span>
<span class="t" style="left:294.6px;top:314px;line-height:15px;font-size:11px;color:#000;letter-spacing:-0.038px;">Cod.Mun.Pr.Serv.</span>
<span class="t" style="left:298px;top:333px;line-height:15px;font-size:11px;color:#000;letter-spacing:-0.319px;">50308</span>
<span class="t" style="left:388.8px;top:314px;line-height:15px;font-size:11px;color:#000;letter-spacing:-0.157px;">Cód. de tipo de Ligação</span>
<span class="t" style="left:394.4px;top:333px;line-height:15px;font-size:11px;color:#000;letter-spacing:-0.178px;">01 - Monofásico</span>
<span class="t" style="left:529.6px;top:314px;line-height:15px;font-size:11px;color:#000;letter-spacing:-0.074px;">Cód. de grupo de tensão</span>
<span class="t" style="left:534.6px;top:333px;line-height:15px;font-size:11px;color:#fff;letter-spacing:0.038px;width:108.4px;overflow:hidden;">01 - A1 - Alta Tensão (</span>
<span class="t" style="left:22.5px;top:351px;line-height:15px;font-size:11px;color:#7c7c7c;letter-spacing:-0.327px;">Finalidade</span>
<span class="t" style="left:169.7px;top:351px;line-height:15px;font-size:11px;color:#7c7c7c;letter-spacing:-0.143px;">Chave Nota Referenciada</span>
<span class="t" style="left:464.6px;top:351px;line-height:15px;font-size:11px;color:#7c7c7c;letter-spacing:-0.123px;">Grupo:</span>
<span class="t" style="left:518.7px;top:351px;line-height:15px;font-size:11px;color:#7c7c7c;letter-spacing:-0.051px;">Energia Injetada:</span>
<span class="t" style="left:617px;top:351px;line-height:15px;font-size:11px;color:#7c7c7c;letter-spacing:-0.107px;">Grupo:</span>
<span class="t" style="left:672.7px;top:351px;line-height:15px;font-size:11px;color:#7c7c7c;letter-spacing:-0.174px;">Outras Deduções</span>
<span class="t" style="left:24.6px;top:394px;line-height:15px;font-size:11px;color:#7c7c7c;letter-spacing:-0.236px;">Modelo Doc.Ref.</span>
<span class="t" style="left:174.2px;top:386px;line-height:15px;font-size:11px;color:#7c7c7c;letter-spacing:-0.111px;">Informações para Mod. Referenciado 06</span>
<span class="t" style="left:173.3px;top:402px;line-height:15px;font-size:11px;color:#000;letter-spacing:-0.132px;">Código de autenticação</span>
<span class="t" style="left:445.7px;top:402px;line-height:15px;font-size:11px;color:#000;letter-spacing:-0.153px;">Série Doc. Ref.</span>
<span class="t" style="left:552.6px;top:402px;line-height:15px;font-size:11px;color:#000;letter-spacing:-0.172px;">Número Doc.Ref.</span>
<span class="t" style="left:658.5px;top:402px;line-height:15px;font-size:11px;color:#000;letter-spacing:-0.186px;">Periodo:</span>
<span class="t" style="left:25.5px;top:456px;line-height:15px;font-size:11px;color:#989898;font-weight:bold;letter-spacing:0.375px;">Água</span>
<span class="t" style="left:22.5px;top:471px;line-height:15px;font-size:11px;color:#7c7c7c;letter-spacing:-0.240px;">Cód. Classe Consumo (442)</span>
<span class="t" style="left:175.3px;top:456px;line-height:15px;font-size:11px;color:#989898;font-weight:bold;letter-spacing:-0.366px;">Gás</span>
<span class="t" style="left:171.5px;top:471px;line-height:15px;font-size:11px;color:#7c7c7c;letter-spacing:-0.252px;">Cód. Classe Consumo (445)</span>
<span class="t" style="left:5.5px;top:559px;line-height:15px;font-size:11px;color:#000;letter-spacing:0.119px;">30/08/2024</span>
<span class="t" style="left:72.5px;top:559px;line-height:15px;font-size:11px;color:#000;letter-spacing:-0.106px;">13:47</span>
<span class="t" style="left:672.2px;top:559px;line-height:15px;font-size:11px;color:#000;letter-spacing:-0.213px;width:107px;overflow:hidden;">Entradas Completa - P</span>
</body></html>
